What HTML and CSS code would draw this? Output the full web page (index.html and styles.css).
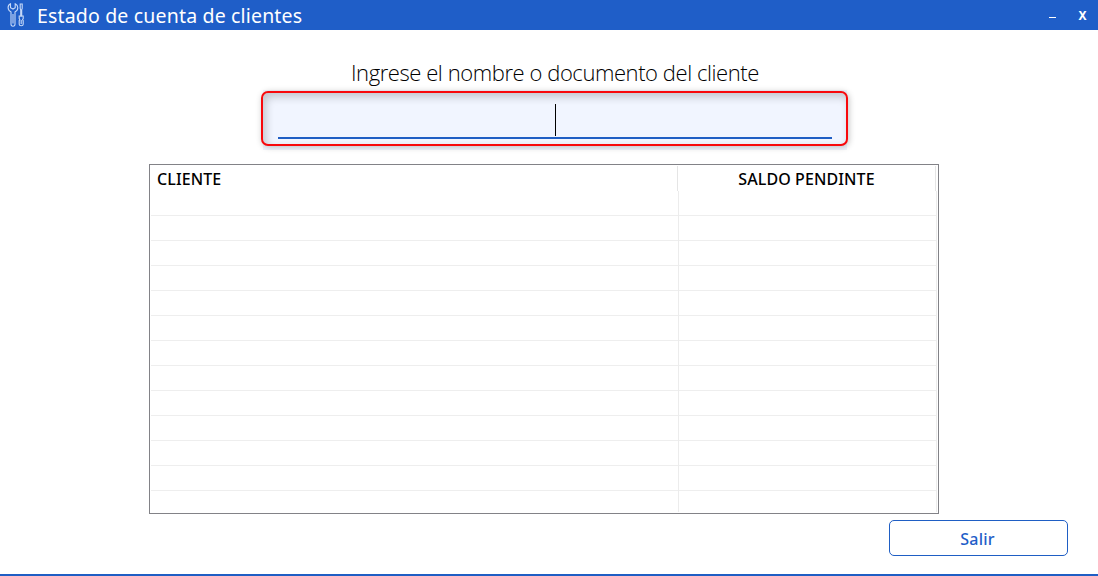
FILE: index.html
```
<!DOCTYPE html>
<html lang="es">
<head>
<meta charset="utf-8">
<title>Estado de cuenta de clientes</title>
<link rel="stylesheet" href="styles.css">
</head>
<body>
<div class="window">
  <header class="titlebar">
    <svg class="tools" width="20" height="26" viewBox="0 0 20 26" fill="none" stroke="#c6d9f8" stroke-width="1.1">
      <path d="M4.500 1.800C2.900 2.600 2 4 2.100 5.800c.1 2 1.200 3.300 2.900 4.100v12.400c0 2.500 4 2.500 4 0V9.900c1.700-.8 2.800-2.100 2.800-4.100 0-1.800-1-3.200-2.600-4v3.900L7 7 4.500 5.700z"/>
      <path d="M7 12v9.500"/>
      <path d="M14.200 2h2v4.500l-.5 1.300v6.200h-1v-6.200l-.5-1.300z"/>
      <path d="M13.200 14h4v2.500l-.6 1 .6 1.200v3.500c0 2-4 2-4 0v-3.500l.6-1.200-.6-1z"/>
      <path d="M15.200 18v4"/>
    </svg>
    <h1 class="title">Estado de cuenta de clientes</h1>
    <div class="controls">
      <span class="minimize"></span>
      <span class="close">X</span>
    </div>
  </header>
  <main class="content">
    <label class="prompt">Ingrese el nombre o documento del cliente</label>
    <div class="search-area">
      <div class="search"><div class="field"><span class="caret"></span></div></div>
    </div>
    <section class="grid">
      <div class="head">
        <div class="cell name"><span>CLIENTE</span></div>
        <div class="cell balance"><span>SALDO PENDINTE</span></div>
      </div>
      <div class="rows">
        <div class="column client"></div>
        <div class="column amount"></div>
      </div>
    </section>
    <button class="exit"><span>Salir</span></button>
  </main>
</div>
</body>
</html>
```
FILE: styles.css
```
* { box-sizing: border-box; }
body { margin: 0; background: #fff; font-family: "Noto Sans", "Open Sans", sans-serif; }
.window { width: 1098px; height: 576px; display: flex; flex-direction: column; border-bottom: 2px solid #1f5ec4; overflow: hidden; }
.titlebar { height: 30px; flex: none; display: flex; align-items: center; padding-left: 6px; background: #1f5ec8; color: #fff; }
.tools { flex: none; margin-top: -1px; }
.title { margin: 0 0 0 11px; font-size: 19.5px; letter-spacing: .17px; line-height: 30px; font-weight: 400; white-space: nowrap; padding-top: 2px; }
.controls { margin-left: auto; display: flex; align-items: center; gap: 22px; padding-right: 11px; }
.minimize { width: 7px; height: 1px; background: #fff; margin-top: 5px; }
.close { font-size: 12px; font-weight: 700; line-height: 30px; width: 9px; text-align: center; padding-top: 1px; }
.content { flex: 1; display: flex; flex-direction: column; align-items: flex-start; }
.prompt { margin: 27px 0 0 351px; height: 33px; line-height: 31px; font-family: "Open Sans", sans-serif; font-size: 22px; letter-spacing: -.43px; font-weight: 300; color: #000; white-space: nowrap; }
.search-area { margin-left: 263px; width: 584px; height: 60px; background: #f1f5fe; display: flex; }
.search { flex: none; width: 587px; height: 55px; margin-left: -2px; margin-top: 1px; padding: 0 14px 0 15px; border: 2px solid #f8080c; border-radius: 7px; background: #f1f5ff; box-shadow: 1px 1px 6px rgba(0,0,0,.24), inset 3px 4px 8px rgba(0,0,0,.2); }
.field { width: 554px; height: 46px; border-bottom: 2px solid #1f5ec4; display: flex; padding: 11px 0 0 277px; }
.caret { width: 1px; height: 32px; background: #000; }
.grid { margin: 14px 0 0 149px; width: 790px; height: 350px; border: 1px solid #828287; padding: 1px; display: flex; flex-direction: column; }
.head { height: 25px; flex: none; display: flex; font-weight: 500; font-size: 16px; letter-spacing: .1px; color: #000; }
.cell { flex: none; border-right: 1px solid #e5e5e5; white-space: nowrap; }
.name { width: 527px; padding-left: 6px; }
.balance { width: 258px; text-align: center; }
.name span, .balance span { display: block; line-height: 26px; }
.rows { flex: 1; display: flex; }
.column { flex: none; border-right: 1px solid #ececec; background: repeating-linear-gradient(to bottom, transparent 0 24px, #eee 24px 25px); }
.client { width: 528px; }
.amount { width: 258px; }
.exit { margin: 6px 0 0 889px; width: 179px; height: 36px; padding: 2px 2px 0 0; border: 1px solid #1f5ec4; border-radius: 5px; background: #fff; color: #1f5ec8; font-family: "Noto Sans", sans-serif; font-size: 16px; letter-spacing: .2px; font-weight: 500; }
```
